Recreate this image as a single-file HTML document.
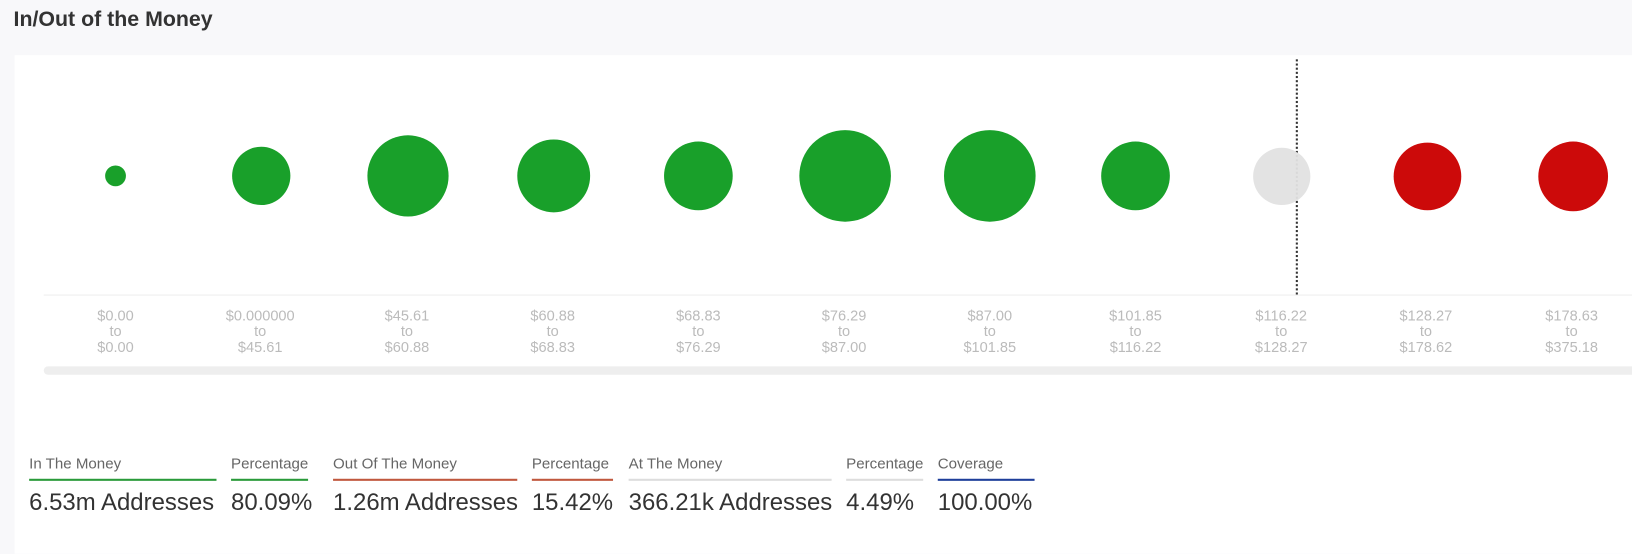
<!DOCTYPE html>
<html><head><style>
body{margin:0;width:1632px;height:532px;background:#f8f8fa;font-family:"Liberation Sans",sans-serif;overflow:hidden}
#w{position:absolute;left:0;top:0;width:1568px;height:511px;transform:scale(1.0408);transform-origin:0 0}
.t{position:absolute;left:13px;top:7px;font-size:20.5px;font-weight:bold;color:#333}
.card{position:absolute;left:14px;top:53px;width:1620px;height:479px;background:#fff}
.c{position:absolute;border-radius:50%}
.g{background:#19a02a}.r{background:#cc0a0a}.gr{background:#e2e2e2}
.lb{position:absolute;top:296px;width:120px;text-align:center;font-size:14px;line-height:15px;color:#bbb}
.s{position:absolute;top:438px}
.s .l{font-size:14.5px;color:#666;padding-bottom:6px;border-bottom:2px solid}
.s .v{font-size:23px;color:#333;margin-top:7px;white-space:nowrap}
</style></head><body><div id="w">
<div class="t">In/Out of the Money</div>
<div class="card"></div>
<div style="position:absolute;left:1245px;top:57px;height:226px;border-left:2px dotted #333"></div>
<div style="position:absolute;left:42px;top:283px;width:1590px;height:1px;background:#eee"></div>
<div style="position:absolute;left:42px;top:352px;width:1590px;height:8px;border-radius:4px;background:#eee"></div>
<div class="c g" style="left:101px;top:159px;width:20px;height:20px"></div>
<div class="c g" style="left:223px;top:141px;width:56px;height:56px"></div>
<div class="c g" style="left:353px;top:130px;width:78px;height:78px"></div>
<div class="c g" style="left:497px;top:134px;width:70px;height:70px"></div>
<div class="c g" style="left:638px;top:136px;width:66px;height:66px"></div>
<div class="c g" style="left:768px;top:125px;width:88px;height:88px"></div>
<div class="c g" style="left:907px;top:125px;width:88px;height:88px"></div>
<div class="c g" style="left:1058px;top:136px;width:66px;height:66px"></div>
<div class="c gr" style="left:1204px;top:142px;width:55px;height:55px;opacity:.95"></div>
<div class="c r" style="left:1339px;top:137px;width:65px;height:65px"></div>
<div class="c r" style="left:1478px;top:136px;width:67px;height:67px"></div>
<div class="lb" style="left:51px">$0.00<br>to<br>$0.00</div>
<div class="lb" style="left:190px">$0.000000<br>to<br>$45.61</div>
<div class="lb" style="left:331px">$45.61<br>to<br>$60.88</div>
<div class="lb" style="left:471px">$60.88<br>to<br>$68.83</div>
<div class="lb" style="left:611px">$68.83<br>to<br>$76.29</div>
<div class="lb" style="left:751px">$76.29<br>to<br>$87.00</div>
<div class="lb" style="left:891px">$87.00<br>to<br>$101.85</div>
<div class="lb" style="left:1031px">$101.85<br>to<br>$116.22</div>
<div class="lb" style="left:1171px">$116.22<br>to<br>$128.27</div>
<div class="lb" style="left:1310px">$128.27<br>to<br>$178.62</div>
<div class="lb" style="left:1450px">$178.63<br>to<br>$375.18</div>
<div class="s" style="left:28px;width:180px"><div class="l" style="border-color:#2a9a3a">In The Money</div><div class="v">6.53m Addresses</div></div>
<div class="s" style="left:222px;width:74px"><div class="l" style="border-color:#2a9a3a">Percentage</div><div class="v">80.09%</div></div>
<div class="s" style="left:320px;width:177px"><div class="l" style="border-color:#c0583e">Out Of The Money</div><div class="v">1.26m Addresses</div></div>
<div class="s" style="left:511px;width:78px"><div class="l" style="border-color:#c0583e">Percentage</div><div class="v">15.42%</div></div>
<div class="s" style="left:604px;width:195px"><div class="l" style="border-color:#ddd">At The Money</div><div class="v">366.21k Addresses</div></div>
<div class="s" style="left:813px;width:74px"><div class="l" style="border-color:#ddd">Percentage</div><div class="v">4.49%</div></div>
<div class="s" style="left:901px;width:93px"><div class="l" style="border-color:#1f3f9a">Coverage</div><div class="v">100.00%</div></div>
</div></body></html>
